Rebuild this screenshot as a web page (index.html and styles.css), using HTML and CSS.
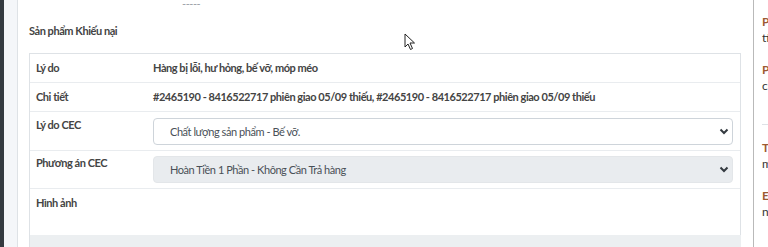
FILE: index.html
```html
<!DOCTYPE html>
<html lang="vi">
<head>
    <meta charset="UTF-8">
    <meta name="viewport" content="width=device-width, initial-scale=1.0">
    <title>Khiếu nại</title>
    <link rel="stylesheet" href="styles.css">
</head>
<body>
    <div class="sidebar"></div>
    <div class="wrapper">
        <div class="main-card">
            <div class="top-row">
                <span class="top-label">Ngày giao hàng</span>
                <span class="top-value">-----</span>
            </div>
            <div class="section-title">Sản phẩm Khiếu nại</div>

            <div class="detail-table">
                <div class="detail-row">
                    <div class="cell-label">Lý do</div>
                    <div class="cell-value">Hàng bị lỗi, hư hỏng, bế vỡ, móp méo</div>
                </div>
                <div class="detail-row">
                    <div class="cell-label">Chi tiết</div>
                    <div class="cell-value">#2465190 - 8416522717 phiên giao 05/09 thiếu, #2465190 - 8416522717 phiên giao 05/09 thiếu</div>
                </div>
                <div class="detail-row row-select">
                    <div class="cell-label">Lý do CEC</div>
                    <div class="select-wrap">
                        <select class="form-select">
                            <option>Chất lượng sản phẩm - Bế vỡ.</option>
                        </select>
                        <svg class="chevron" width="10" height="7" viewBox="0 0 10 7"><path d="M1.5 1.5 L5 5 L8.5 1.5" fill="none" stroke="#343a40" stroke-width="2"/></svg>
                    </div>
                </div>
                <div class="detail-row row-select">
                    <div class="cell-label">Phương án CEC</div>
                    <div class="select-wrap">
                        <select class="form-select disabled" disabled>
                            <option>Hoàn Tiền 1 Phần - Không Cần Trả hàng</option>
                        </select>
                        <svg class="chevron" width="10" height="7" viewBox="0 0 10 7"><path d="M1.5 1.5 L5 5 L8.5 1.5" fill="none" stroke="#343a40" stroke-width="2"/></svg>
                    </div>
                </div>
                <div class="detail-row row-image">
                    <div class="cell-label">Hình ảnh</div>
                    <div class="cell-value"></div>
                </div>
            </div>
            <div class="table-foot"></div>
        </div>

        <div class="side-card">
            <div class="side-item">
                <div class="side-label">Phí vận chuyển</div>
                <div class="side-value">tính theo đơn</div>
            </div>
            <div class="side-item">
                <div class="side-label">Phí dịch vụ</div>
                <div class="side-value">chưa có</div>
            </div>
            <div class="side-sep"></div>
            <div class="side-item">
                <div class="side-label">Trạng thái</div>
                <div class="side-value">mới tạo</div>
            </div>
            <div class="side-item">
                <div class="side-label">Email</div>
                <div class="side-value">none</div>
            </div>
        </div>
    </div>

    <svg class="cursor" width="12" height="18" viewBox="0 0 12 18">
        <path d="M1 1 L1 14 L4 11 L6.5 16.5 L8.5 15.5 L6 10 L10.5 10 Z" fill="#fff" stroke="#222" stroke-width="1"/>
    </svg>
</body>
</html>
```

FILE: styles.css
```css
* {
    box-sizing: border-box;
}

body {
    margin: 0;
    height: 247px;
    overflow: hidden;
    display: flex;
    font-family: Lato, 'Noto Sans', sans-serif;
    font-size: 11px;
    letter-spacing: -0.45px;
    color: #495057;
    background: #f4f6f9;
}

.sidebar {
    width: 4px;
    background: #343a40;
    flex-shrink: 0;
}

.wrapper {
    flex: 1;
    display: flex;
    padding-left: 13px;
    min-width: 0;
}

.main-card {
    width: 737px;
    flex-shrink: 0;
    background: #fff;
    border-left: 1px solid #dee2e6;
    border-right: 1px solid #b9b9b9;
    padding: 0 12px 0 11px;
}

.top-row {
    display: flex;
    height: 26px;
    margin-top: -16px;
    line-height: 14px;
}

.top-label {
    width: 153px;
    font-weight: 700;
}

.top-value {
    padding-top: 13px;
    color: #9aa0a6;
}

.section-title {
    margin: 14px 0 15px;
    line-height: 14px;
    font-weight: 700;
    color: #444;
}

.detail-table {
    border: 1px solid #dee2e6;
    border-bottom: none;
}

.detail-row {
    display: grid;
    grid-template-columns: 123px 1fr;
    border-top: 1px solid #e9ecef;
    line-height: 14px;
    font-weight: 700;
    color: #444;
    padding: 7px 0;
}

.detail-row:first-child {
    border-top: none;
}

.cell-label {
    padding-left: 6px;
}

.row-select {
    padding: 6px 0 5px;
}

.row-select + .row-select {
    padding-top: 5px;
}

.row-image {
    height: 47px;
}

.select-wrap {
    position: relative;
    margin-right: 7px;
}

.form-select {
    display: block;
    width: 100%;
    height: 27px;
    appearance: none;
    -webkit-appearance: none;
    border: 1px solid #ced4da;
    border-radius: 4px;
    background: #fff;
    padding: 0 24px 0 16px;
    font-family: Lato, 'Noto Sans', sans-serif;
    font-size: 11px;
    letter-spacing: -0.45px;
    color: #495057;
    opacity: 1;
}

.form-select.disabled {
    background: #e9ecef;
    border-color: #e3e6e9;
}

.chevron {
    position: absolute;
    right: 4px;
    top: 10px;
}

.table-foot {
    height: 20px;
    background: #eceff1;
    border-left: 1px solid #dee2e6;
}

.side-card {
    flex: 1;
    background: #fff;
    padding: 14px 0 0 8px;
    overflow: hidden;
    white-space: nowrap;
    line-height: 16px;
    font-size: 12px;
    letter-spacing: 0;
}

.side-item {
    margin-bottom: 16px;
}

.side-label {
    color: #9c5a32;
    font-weight: 700;
}

.side-value {
    color: #333;
}

.side-sep {
    border-top: 1px solid #dee2e6;
    margin: 30px 0 15px;
}

.cursor {
    position: absolute;
    left: 404px;
    top: 33px;
}
```
